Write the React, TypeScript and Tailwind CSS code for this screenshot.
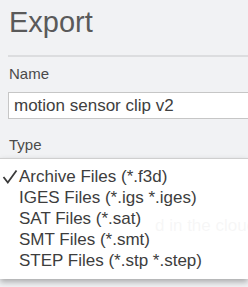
const fileTypes = [
  { label: 'Archive Files (*.f3d)', checked: true },
  { label: 'IGES Files (*.igs *.iges)', checked: false },
  { label: 'SAT Files (*.sat)', checked: false },
  { label: 'SMT Files (*.smt)', checked: false },
  { label: 'STEP Files (*.stp *.step)', checked: false },
]

function CheckMark() {
  return (
    <svg width="16" height="15" viewBox="0 0 16 15" className="block">
      <path d="M1.5 8 L5.8 13.5 L14.5 1.5" fill="none" stroke="#3a3a3a" strokeWidth="1.8" />
    </svg>
  )
}

export default function App() {
  return (
    <div className="relative w-[248px] h-[287px] overflow-hidden bg-[#f1f2f4] font-['Liberation_Sans',Arial,sans-serif]">
      <div className="pl-2">
        <h1 className="pt-[8px] pl-px text-[29px] leading-[29px] text-[#5a5a5a]">Export</h1>
        <div className="mt-[18px] h-[2px] bg-[#dcdddf]" />

        <p className="mt-[8px] pl-px text-[15px] leading-[18px] text-[#4a4a4a]">Name</p>
        <div className="mt-[9px] flex h-[27px] w-[260px] items-center border border-[#c6c6c6] bg-white pl-[5px] text-[17px] text-[#404040]">
          motion sensor clip v2
        </div>

        <p className="mt-[17px] pl-px text-[15px] leading-[18px] text-[#4a4a4a]">Type</p>
        <p className="mt-[61px] pl-[147px] whitespace-nowrap text-[17px] leading-[21px] text-[#555]">
          d in the cloud
        </p>
      </div>

      <ul className="absolute left-0 right-0 top-[158px] border-t border-[#cfcfcf] bg-white/95 pt-[7px] pb-[8px] shadow-[0_3px_6px_rgba(0,0,0,0.3)]">
        {fileTypes.map((type) => (
          <li
            key={type.label}
            className="flex h-[21px] items-center whitespace-nowrap text-[17px] leading-[21px] text-[#3d3d3d]"
          >
            <span className="flex w-[19px] justify-center">
              {type.checked && <CheckMark />}
            </span>
            {type.label}
          </li>
        ))}
      </ul>
    </div>
  )
}
